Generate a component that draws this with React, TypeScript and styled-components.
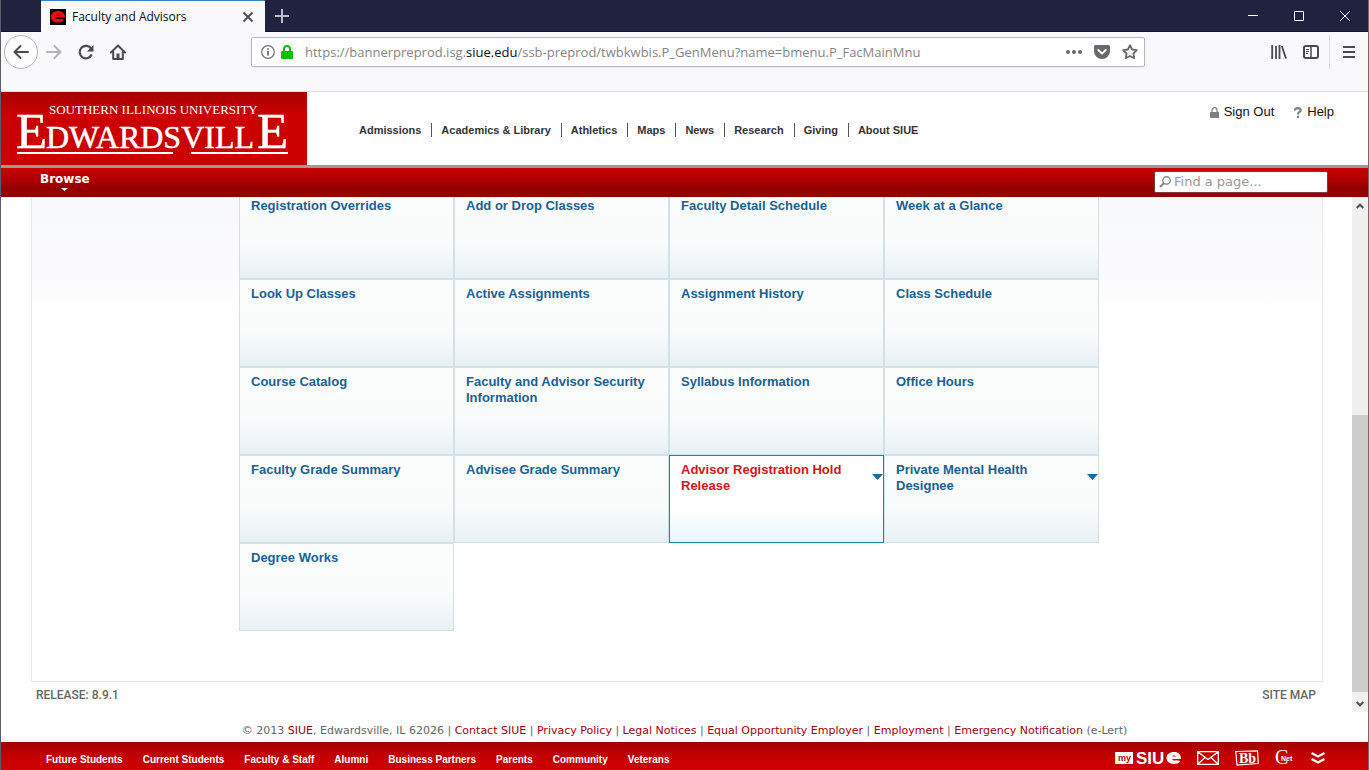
import React from "react";
import styled, { createGlobalStyle, css } from "styled-components";

const sans = `"Liberation Sans", Arial, sans-serif`;
const wide = `"DejaVu Sans", Verdana, sans-serif`;
const ui = `"Open Sans", "Segoe UI", sans-serif`;

const GlobalStyle = createGlobalStyle`
  *, *::before, *::after { box-sizing: border-box; }
  body { margin: 0; background: #fff; font-family: ${sans}; }
  button { border: 0; padding: 0; background: none; font: inherit; color: inherit; cursor: pointer; }
  a { text-decoration: none; color: inherit; }
  svg { display: block; }
`;

const Window = styled.div`
  display: flex;
  flex-direction: column;
  height: 100vh;
  min-height: 600px;
  overflow: hidden;
  border-left: 1px solid #5f5b68;
  border-right: 1px solid #6b6b6b;
`;

/* Browser chrome */
const TitleBar = styled.div`
  display: flex;
  flex: none;
  height: 32px;
  padding-left: 40px;
  background: #20223f;
  box-shadow: inset 0 -1px #14152b;
`;

const Tab = styled.div`
  display: flex;
  align-items: center;
  gap: 6px;
  width: 224px;
  padding: 0 11px 0 9px;
  border-top: 1px solid #3a82d0;
  background: #f9f9fb;
  font: 12px/16px ${ui};
  color: #0c0c0d;
`;

const TabTitle = styled.span`
  flex: 1;
  white-space: nowrap;
`;

const NewTab = styled.button`
  display: grid;
  place-items: center;
  width: 34px;
`;

const WindowButtons = styled.div`
  display: flex;
  margin-left: auto;
`;

const WindowButton = styled.button`
  display: grid;
  place-items: center;
  width: 46px;
`;

const ToolBar = styled.div`
  display: flex;
  flex: none;
  align-items: center;
  height: 60px;
  padding: 0 3px 19px 3px;
  border-bottom: 1px solid #dedee0;
  background: #f9f9fb;
`;

const ToolButton = styled.button<{ $round?: boolean }>`
  display: grid;
  place-items: center;
  width: 32px;
  height: 34px;
  ${(p) =>
    p.$round &&
    css`
      width: 34px;
      border: 1px solid #b4b4b6;
      border-radius: 50%;
      background: #fdfdfe;
    `}
`;

const AddressBar = styled.div`
  display: flex;
  flex: 1;
  align-items: center;
  gap: 6px;
  min-width: 0;
  height: 30px;
  margin: 0 118px 0 117px;
  padding: 0 3px 0 9px;
  border: 1px solid #b9b9bb;
  border-radius: 2px;
  background: #fff;
  box-shadow: 0 1px 3px rgba(0, 0, 0, 0.06);
`;

const Address = styled.div`
  flex: 1;
  min-width: 0;
  overflow: hidden;
  padding-left: 6px;
  font: 13px/20px ${ui};
  color: #858585;
  white-space: nowrap;

  b {
    font-weight: 400;
    color: #0c0c0d;
  }
`;

const AddressAction = styled.button`
  display: grid;
  place-items: center;
  width: 22px;
  height: 22px;
`;

const ToolDivider = styled.span`
  width: 1px;
  height: 34px;
  margin: 0 3px 0 2px;
  background: #dcdcde;
`;

/* Site header */
const Header = styled.header`
  display: flex;
  flex: none;
  height: 73px;
  background: #fff;
`;

const Logo = styled.a`
  flex: none;
  width: 306px;
  background: linear-gradient(#a60000, #cb0000 32%, #cc0000);
`;

const SiteNav = styled.nav`
  display: flex;
  align-self: flex-start;
  margin: 31px 0 0 43px;
  font: bold 11px/14px ${sans};
  color: #333;
`;

const SiteLink = styled.a`
  padding: 0 10px 0 9px;
  white-space: nowrap;

  & + & {
    border-left: 1px solid #555;
  }
`;

const Account = styled.div`
  display: flex;
  gap: 20px;
  align-self: flex-start;
  margin: 12px 34px 0 auto;
  font: 13px/16px ${sans};
  color: #111;
`;

const AccountLink = styled.a`
  display: flex;
  align-items: center;
  gap: 5px;
`;

const MenuBar = styled.div`
  display: flex;
  flex: none;
  justify-content: space-between;
  height: 32px;
  padding: 0 40px 0 39px;
  border-top: 3px solid #999;
  background: linear-gradient(#cc0000, #a80000 50%, #940000 70%, #940000);
`;

const Browse = styled.button`
  display: flex;
  flex-direction: column;
  align-items: center;
  gap: 1px;
  padding-top: 4px;
  font: bold 12px/15px ${wide};
  color: #fff;
`;

const Search = styled.label`
  display: flex;
  align-items: center;
  gap: 3px;
  width: 174px;
  height: 22px;
  margin-top: 3px;
  padding: 0 4px;
  border: 1px solid #7c3a3a;
  border-radius: 2px;
  background: #fff;

  input {
    flex: 1;
    min-width: 0;
    padding: 0;
    border: 0;
    outline: 0;
    background: none;
    font: 13px/18px ${wide};
    color: #333;
  }
  input::placeholder {
    color: #999;
    opacity: 1;
  }
`;

/* Scrolled page */
const Viewport = styled.div`
  display: flex;
  flex: 1;
  min-height: 0;
`;

const Page = styled.main`
  display: flex;
  flex: 1;
  flex-direction: column;
  justify-content: flex-end;
  min-width: 0;
  overflow: hidden;
  padding: 0 29px 0 30px;
`;

const Panel = styled.section`
  display: flex;
  flex: none;
  justify-content: center;
  padding: 24px 16px 50px 0;
  border: 1px solid #e6e8ea;
  background: linear-gradient(#f7f8f9, #fbfbfd 110px, #fff 150px);
`;

const Tiles = styled.div`
  display: grid;
  grid-template-columns: repeat(4, 215px);
  grid-auto-rows: 88px;
`;

const Tile = styled.a<{ $active?: boolean }>`
  display: flex;
  align-items: flex-start;
  justify-content: space-between;
  padding: 6px 0 0 11px;
  border: 1px solid #d2e1e8;
  background: linear-gradient(#fbfdfd, #fafcfc 60%, #e7f0f4);
  font: bold 13px/16px ${sans};
  color: #1a6193;

  ${(p) =>
    p.$active &&
    css`
      border-color: #2a7fa3;
      background: linear-gradient(#fff, #fff 60%, #e8f6fb);
      box-shadow: 0 0 2px #a8e4f4;
      color: #d8141c;
    `}

  svg {
    flex: none;
    margin-top: 12px;
  }
`;

const PageInfo = styled.div`
  display: flex;
  flex: none;
  justify-content: space-between;
  height: 30px;
  padding: 5px 7px 0 5px;
  font: 500 12px/16px Roboto, ${sans};
  color: #666;
`;

const ScrollBar = styled.div`
  display: flex;
  flex: none;
  flex-direction: column;
  width: 16px;
  background: #f0f0f0;
`;

const ScrollButton = styled.button`
  display: grid;
  place-items: center;
  height: 17px;
`;

const ScrollSpace = styled.div<{ $share: number; $thumb?: boolean }>`
  flex: ${(p) => p.$share} 0 0;
  background: ${(p) => (p.$thumb ? "#cdcdcd" : "transparent")};
`;

/* Footer */
const Legal = styled.p`
  flex: none;
  margin: 0;
  padding: 11px 0 3px;
  font: 11px/16px ${wide};
  text-align: center;
  white-space: nowrap;
  color: #666;

  a {
    color: #a3000d;
  }
`;

const Footer = styled.footer`
  display: flex;
  flex: none;
  align-items: center;
  justify-content: space-between;
  height: 28px;
  padding: 4px 43px 0 45px;
  background: linear-gradient(#a60000, #c80000 60%, #cc0000);
  color: #fff;
`;

const FooterLinks = styled.nav`
  display: flex;
  gap: 20px;
  padding-top: 3px;
  font: bold 10px/14px ${sans};
  white-space: nowrap;
`;

const FooterIcons = styled.div`
  display: flex;
  align-items: center;
  gap: 16px;
`;

const DownArrow = ({ w, h, fill }: { w: number; h: number; fill: string }) => (
  <svg width={w} height={h} viewBox={`0 0 ${w} ${h}`} aria-hidden="true">
    <path d={`M0 0H${w}L${w / 2} ${h}Z`} fill={fill} />
  </svg>
);

const siteLinks = ["Admissions", "Academics & Library", "Athletics", "Maps", "News", "Research", "Giving", "About SIUE"];
const footerLinks = ["Future Students", "Current Students", "Faculty & Staff", "Alumni", "Business Partners", "Parents", "Community", "Veterans"];
const legalLinks = ["Contact SIUE", "Privacy Policy", "Legal Notices", "Equal Opportunity Employer", "Employment", "Emergency Notification"];

const tiles: { name: string; menu?: boolean; active?: boolean }[] = [
  { name: "Registration Overrides" },
  { name: "Add or Drop Classes" },
  { name: "Faculty Detail Schedule" },
  { name: "Week at a Glance" },
  { name: "Look Up Classes" },
  { name: "Active Assignments" },
  { name: "Assignment History" },
  { name: "Class Schedule" },
  { name: "Course Catalog" },
  { name: "Faculty and Advisor Security Information" },
  { name: "Syllabus Information" },
  { name: "Office Hours" },
  { name: "Faculty Grade Summary" },
  { name: "Advisee Grade Summary" },
  { name: "Advisor Registration Hold Release", menu: true, active: true },
  { name: "Private Mental Health Designee", menu: true },
  { name: "Degree Works" },
];

const ink = "#4a4a4f";

export default function App() {
  return (
    <Window>
      <GlobalStyle />
      <TitleBar>
        <Tab>
          <svg width="16" height="16" viewBox="0 0 16 16" aria-hidden="true">
            <rect width="16" height="16" fill="#000" />
            <path d="M8 2C3.500 2 1 4.500 1 8s2.500 5.500 7 5.500c3 0 5-1 6-3L9 9.800c-2 .6-3.200 0-3.500-1.300H15C15 4.500 12.500 2 8 2Z" fill="#f00b0b" />
            <path d="M6 6.500c.5-1.300 3.500-1.300 4 0Z" fill="#000" />
          </svg>
          <TabTitle>Faculty and Advisors</TabTitle>
          <button aria-label="Close tab">
            <svg width="12" height="12" viewBox="0 0 12 12" stroke={ink} strokeWidth="1.8">
              <path d="M1.500 1.500l9 9M10.500 1.500l-9 9" />
            </svg>
          </button>
        </Tab>
        <NewTab aria-label="New tab">
          <svg width="14" height="14" viewBox="0 0 14 14" stroke="#bdbdc8" strokeWidth="2">
            <path d="M7 0v14M0 7h14" />
          </svg>
        </NewTab>
        <WindowButtons>
          <WindowButton aria-label="Minimize">
            <svg width="10" height="10" viewBox="0 0 10 10" stroke="#fff"><path d="M0 4.500h10" /></svg>
          </WindowButton>
          <WindowButton aria-label="Maximize">
            <svg width="10" height="10" viewBox="0 0 10 10" fill="none" stroke="#fff"><path d="M.5.5h9v9h-9z" /></svg>
          </WindowButton>
          <WindowButton aria-label="Close">
            <svg width="10" height="10" viewBox="0 0 10 10" stroke="#fff"><path d="M0 0l10 10M10 0L0 10" /></svg>
          </WindowButton>
        </WindowButtons>
      </TitleBar>

      <ToolBar>
        <ToolButton $round aria-label="Back">
          <svg width="16" height="16" viewBox="0 0 16 16" fill="none" stroke={ink} strokeWidth="2" strokeLinecap="round" strokeLinejoin="round">
            <path d="M15 8H1.500M7.500 2l-6 6 6 6" />
          </svg>
        </ToolButton>
        <ToolButton aria-label="Forward">
          <svg width="16" height="16" viewBox="0 0 16 16" fill="none" stroke="#b4b4b6" strokeWidth="2" strokeLinecap="round" strokeLinejoin="round">
            <path d="M1 8h13.500M8.500 2l6 6-6 6" />
          </svg>
        </ToolButton>
        <ToolButton aria-label="Reload">
          <svg width="16" height="16" viewBox="0 0 16 16" fill="none" stroke={ink} strokeWidth="2.200">
            <path d="M13 4.500A6.200 6.200 0 1 0 13.700 10.500" />
            <path d="M15.500 1v6.500H9Z" fill={ink} stroke="none" />
          </svg>
        </ToolButton>
        <ToolButton aria-label="Home">
          <svg width="16" height="16" viewBox="0 0 16 16" fill="none" stroke={ink} strokeWidth="2" strokeLinejoin="round" strokeLinecap="round">
            <path d="M1 8.500l7-7 7 7M3.200 8v7h9.600V8" />
            <path d="M6.500 15v-5.500h3V15Z" fill={ink} stroke="none" />
          </svg>
        </ToolButton>
        <AddressBar>
          <svg width="14" height="14" viewBox="0 0 14 14" fill="none" stroke="#707074" strokeWidth="1.200" aria-hidden="true">
            <circle cx="7" cy="7" r="6.300" />
            <path d="M7 6v4.500M7 3.200v1.600" strokeWidth="1.800" />
          </svg>
          <svg width="12" height="14" viewBox="0 0 12 14" aria-hidden="true">
            <path d="M3 6.500V4a3 3 0 0 1 6 0v2.500" fill="none" stroke="#12bc00" strokeWidth="2" />
            <rect y="6" width="12" height="8" rx="1" fill="#12bc00" />
          </svg>
          <Address role="textbox" aria-label="Address">
            https://bannerpreprod.isg.<b>siue.edu</b>/ssb-preprod/twbkwbis.P_GenMenu?name=bmenu.P_FacMainMnu
          </Address>
          <AddressAction aria-label="Page actions">
            <svg width="16" height="4" viewBox="0 0 16 4" fill="#68686c">
              <circle cx="2" cy="2" r="2" /><circle cx="8" cy="2" r="2" /><circle cx="14" cy="2" r="2" />
            </svg>
          </AddressAction>
          <AddressAction aria-label="Save to Pocket">
            <svg width="16" height="14" viewBox="0 0 16 14">
              <path d="M1.500 0h13A1.500 1.500 0 0 1 16 1.500V6A8 8 0 0 1 0 6V1.500A1.500 1.500 0 0 1 1.500 0Z" fill="#68686c" />
              <path d="M4.300 5L8 8.600 11.700 5" fill="none" stroke="#fff" strokeWidth="2" strokeLinecap="round" strokeLinejoin="round" />
            </svg>
          </AddressAction>
          <AddressAction aria-label="Bookmark">
            <svg width="16" height="16" viewBox="0 0 16 16" fill="none" stroke="#68686c" strokeWidth="1.800" strokeLinejoin="round">
              <path d="M8 1.200l2.100 4.300 4.700.7-3.400 3.300.8 4.700L8 12l-4.200 2.200.8-4.700L1.200 6.200l4.700-.7Z" />
            </svg>
          </AddressAction>
        </AddressBar>
        <ToolButton aria-label="Library">
          <svg width="16" height="14" viewBox="0 0 16 14" stroke={ink} strokeWidth="1.800">
            <path d="M1.200 0v14M5 1v13M8.500 0v14M10.800 1l4.200 12.500" />
          </svg>
        </ToolButton>
        <ToolButton aria-label="Sidebars">
          <svg width="16" height="14" viewBox="0 0 16 14" fill="none" stroke={ink} strokeWidth="2">
            <rect x="1" y="1" width="14" height="12" rx="2" />
            <path d="M8 1v12" strokeWidth="1.500" />
            <path d="M3 4.500h3M3 6.500h3M3 8.500h2" strokeWidth="1" />
          </svg>
        </ToolButton>
        <ToolDivider />
        <ToolButton aria-label="Menu">
          <svg width="12" height="12" viewBox="0 0 12 12" stroke={ink} strokeWidth="2"><path d="M0 1h12M0 6h12M0 11h12" /></svg>
        </ToolButton>
      </ToolBar>

      <Header>
        <Logo href="#" aria-label="Southern Illinois University Edwardsville">
          <svg width="306" height="73" viewBox="0 0 306 73" fill="#fff" fontFamily="'Liberation Serif', 'Times New Roman', serif">
            <text x="48" y="22" fontSize="13">SOUTHERN ILLINOIS UNIVERSITY</text>
            <g stroke="#fff" strokeWidth="0.500">
              <text x="15" y="56" fontSize="51">E</text>
              <text x="45" y="56" fontSize="32">DWARDSVILL</text>
              <text x="256" y="56" fontSize="51">E</text>
            </g>
            <path d="M16 60h156v2H16zM190 60h97v2h-97z" />
          </svg>
        </Logo>
        <SiteNav>
          {siteLinks.map((name) => (
            <SiteLink href="#" key={name}>{name}</SiteLink>
          ))}
        </SiteNav>
        <Account>
          <AccountLink href="#">
            <svg width="9" height="11" viewBox="0 0 9 11" aria-hidden="true">
              <path d="M2 5V3.200a2.500 2.500 0 0 1 5 0V5" fill="none" stroke="#888" strokeWidth="1.300" />
              <rect y="5" width="9" height="6" fill="#808080" />
            </svg>
            Sign Out
          </AccountLink>
          <AccountLink href="#">
            <svg width="8" height="11" viewBox="0 0 8 11" fill="none" stroke="#808080" strokeWidth="2.200" aria-hidden="true">
              <path d="M1 3.500C1 .5 6.800.5 6.800 3.200 6.800 5 4 5 4 7.500M4 8.800V11" />
            </svg>
            Help
          </AccountLink>
        </Account>
      </Header>

      <MenuBar>
        <Browse>
          Browse
          <DownArrow w={7} h={3} fill="#fff" />
        </Browse>
        <Search>
          <svg width="12" height="12" viewBox="0 0 12 12" fill="none" stroke="#888" aria-hidden="true">
            <circle cx="7.500" cy="4.500" r="3.700" strokeWidth="1.400" />
            <path d="M4.800 7.300L1 11" strokeWidth="2.200" />
          </svg>
          <input type="text" placeholder="Find a page..." aria-label="Find a page" />
        </Search>
      </MenuBar>

      <Viewport>
        <Page>
          <Panel>
            <Tiles>
              {tiles.map((t) => (
                <Tile href="#" key={t.name} $active={t.active}>
                  <span>{t.name}</span>
                  {t.menu && <DownArrow w={11} h={6} fill="#1a6b9c" />}
                </Tile>
              ))}
            </Tiles>
          </Panel>
          <PageInfo>
            <span>RELEASE: 8.9.1</span>
            <a href="#">SITE MAP</a>
          </PageInfo>
        </Page>
        <ScrollBar>
          <ScrollButton aria-label="Scroll up">
            <svg width="8" height="6" viewBox="0 0 8 6" fill="none" stroke="#505050" strokeWidth="2"><path d="M.7 5L4 1.700 7.300 5" /></svg>
          </ScrollButton>
          <ScrollSpace $share={201} />
          <ScrollSpace $share={277} $thumb />
          <ScrollSpace $share={3} />
          <ScrollButton aria-label="Scroll down">
            <svg width="8" height="6" viewBox="0 0 8 6" fill="none" stroke="#505050" strokeWidth="2"><path d="M.7 1L4 4.300 7.300 1" /></svg>
          </ScrollButton>
        </ScrollBar>
      </Viewport>

      <Legal>
        © 2013 <a href="#">SIUE</a>, Edwardsville, IL 62026
        {legalLinks.map((name) => (
          <React.Fragment key={name}>
            {" | "}
            <a href="#">{name}</a>
          </React.Fragment>
        ))}{" "}
        (e-Lert)
      </Legal>

      <Footer>
        <FooterLinks>
          {footerLinks.map((name) => (
            <a href="#" key={name}>{name}</a>
          ))}
        </FooterLinks>
        <FooterIcons>
          <a href="#" aria-label="my SIUE">
            <svg width="66" height="22" viewBox="0 0 66 22" fill="#fff">
              <rect y="5" width="18" height="12" />
              <text x="3" y="14" fontSize="9" fontWeight="bold" fontFamily="Liberation Sans">
                <tspan fill="#c00000">my</tspan>
              </text>
              <text x="21" y="17" fontSize="17" fontWeight="bold" fontFamily="Liberation Sans">SIU</text>
              <path d="M59 5c-4.500 0-7.500 2.500-7.500 6s3 6 7.500 6c3 0 5.500-1 6.500-3l-4.500-.8c-1.700.6-3.500.2-3.800-1.200H66C66 7.500 63.500 5 59 5Zm-1.800 4.500c.5-1.200 3.300-1.200 3.700 0Z" />
            </svg>
          </a>
          <a href="#" aria-label="Email">
            <svg width="22" height="14" viewBox="0 0 22 14" fill="none" stroke="#fff" strokeWidth="1.300">
              <path d="M.7.7h20.600v12.600H.7ZM1 1l10 7.500L21 1M1 13l7-6.500M21 13l-7-6.500" />
            </svg>
          </a>
          <a href="#" aria-label="Blackboard">
            <svg width="24" height="16" viewBox="0 0 24 16" fill="#fff">
              <path d="M.8 1.500L22.500.8l.8 12.700L2 15.200Z" fill="none" stroke="#fff" strokeWidth="1.200" />
              <text x="4" y="13" fontSize="14" fontWeight="bold" fontFamily="Liberation Serif">Bb</text>
            </svg>
          </a>
          <a href="#" aria-label="CougarNet">
            <svg width="20" height="24" viewBox="0 0 20 24" fill="#fff">
              <text x="0" y="18" fontSize="20" fontFamily="Liberation Serif">C</text>
              <text x="6" y="15" fontSize="7" fontWeight="bold" fontFamily="Liberation Sans">Net</text>
            </svg>
          </a>
          <a href="#" aria-label="More">
            <svg width="14" height="12" viewBox="0 0 14 12" fill="none" stroke="#fff" strokeWidth="2.200">
              <path d="M.5 1l6.500 3.500L13.500 1M.5 7l6.500 3.500L13.500 7" />
            </svg>
          </a>
        </FooterIcons>
      </Footer>
    </Window>
  );
}
